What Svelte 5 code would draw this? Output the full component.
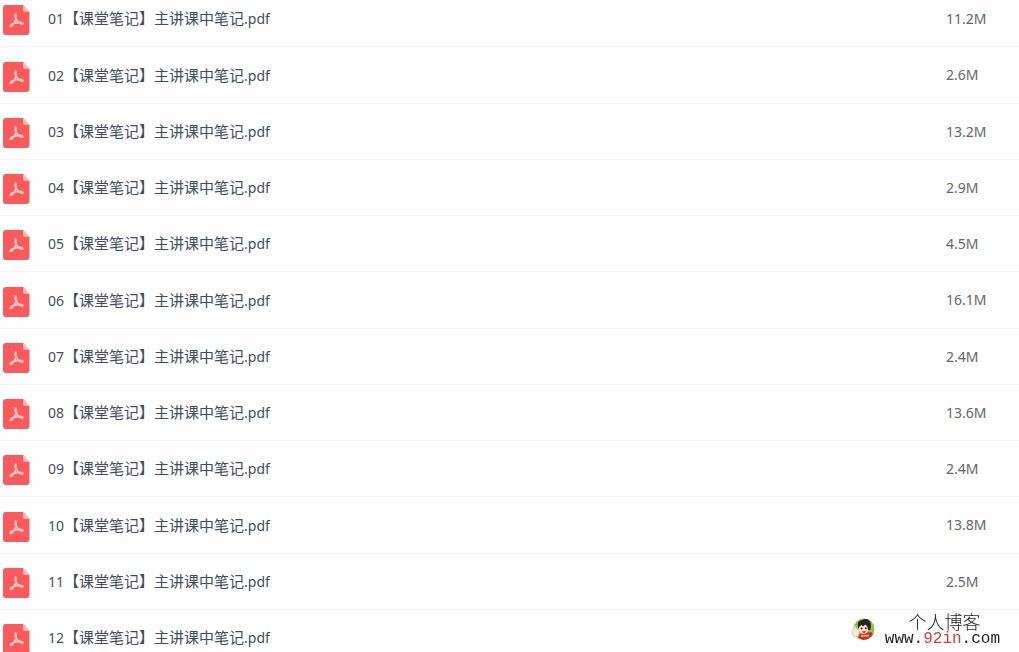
<script>
  const sizes = ['11.2M', '2.6M', '13.2M', '2.9M', '4.5M', '16.1M', '2.4M', '13.6M', '2.4M', '13.8M', '2.5M', ''];
  const files = sizes.map((size, i) => ({
    number: String(i + 1).padStart(2, '0'),
    title: '【课堂笔记】主讲课中笔记',
    size
  }));
</script>

<main>
  <table>
    <tbody>
      {#each files as file (file.number)}
        <tr>
          <td class="icon">
            <svg viewBox="0 0 27 30" width="27" height="30" aria-hidden="true">
              <path d="M3 0H20L26.5 7V27Q26.5 30 23.5 30H3Q0 30 0 27V3Q0 0 3 0Z" fill="#fa5a5b" />
              <path d="M20 0L26.5 7H22Q20 7 20 5Z" fill="#fdb5b5" />
              <path
                d="M12.6 9C13.9 11.5 13 14.8 11.5 17.5C10.2 19.8 8.6 21.6 7.3 21.4C6.6 20.2 9.3 18.8 12.2 18C15 17.3 18.5 17 20 18.3C19.3 19.8 16.6 18.7 14.8 16.6C12.8 14.4 11.7 11 12.6 9Z"
                fill="none"
                stroke="#fdcaca"
                stroke-width="1.7"
                stroke-linejoin="round"
              />
            </svg>
          </td>
          <td class="name">{file.number}<span>{file.title}</span>.pdf</td>
          <td class="size">{file.size}</td>
        </tr>
      {/each}
    </tbody>
  </table>

  <aside>
    <svg viewBox="0 0 24 24" width="24" height="24" aria-hidden="true">
      <circle cx="13" cy="12" r="10.5" fill="#8cc63e" />
      <path d="M7 21Q8 16 13 16L20 15Q23 17 21 19Q17 23 12 23Z" fill="#c9302b" />
      <path d="M10 19L18 18.5" stroke="#f1c7a0" stroke-width="1.5" />
      <ellipse cx="12.5" cy="12" rx="4.8" ry="5" fill="#fbe3d5" />
      <path d="M7 10Q5.5 4 11 3Q16.500 .5 19 4.500Q21 8 19 13L17 13L16.500 10L14.500 7.500L12 9.500L10.500 8L8.500 9.500L7.500 12Z" fill="#2b2027" />
      <circle cx="10.600" cy="11.500" r="1" fill="#33242a" />
      <circle cx="14.800" cy="11.300" r="1" fill="#33242a" />
      <path d="M10.800 13.800Q13 15 15 13.500Q14.500 16.300 12.800 16.200Q11.300 16 10.800 13.800Z" fill="#bd3b35" />
      <path d="M3 9Q5 8.500 5 11.500Q8 11.500 8 14Q8.500 19 5 20Q1 20 1 16Q1 13 3 12.500Z" fill="#fbe9df" stroke="#d8b9a7" stroke-width=".6" />
    </svg>
    <div class="mark">
      <strong>个人博客</strong>
      <span>www.<em>92in</em>.com</span>
    </div>
  </aside>
</main>

<style>
  :global(body) {
    background: #fefefe;
    overflow: hidden;
  }

  main {
    height: 100vh;
    overflow: hidden;
    font-family: "Noto Sans", "Noto Sans CJK SC", sans-serif;
    font-size: 14px;
    line-height: 20px;
  }

  table {
    width: 100%;
    margin-top: -9px;
    border-collapse: separate;
    border-spacing: 0;
    table-layout: fixed;
  }

  td {
    height: 55px;
    padding: 0;
    border-bottom: 1px solid #f4f4f5;
    vertical-align: middle;
    white-space: nowrap;
  }

  tr:nth-child(4n + 2) td {
    height: 56px;
  }

  .icon {
    width: 45px;
    padding: 3px 0 0 3px;
    box-sizing: border-box;
    height: 56px;
  }

  .icon svg {
    display: block;
  }

  .name {
    color: #424e5e;
    padding-left: 3px;
  }

  .name span {
    font-family: "Noto Sans CJK SC", sans-serif;
    font-size: 15px;
  }

  .size {
    width: 73px;
    color: #666;
  }

  aside {
    position: fixed;
    right: 19px;
    bottom: 4px;
    display: flex;
    align-items: center;
    gap: 10px;
  }

  .mark {
    display: flex;
    flex-direction: column;
    align-items: center;
    padding-top: 2px;
    color: #222;
  }

  strong {
    padding-left: 4px;
    font-family: "Noto Sans CJK SC", sans-serif;
    font-size: 18px;
    font-weight: 300;
    line-height: 18px;
  }

  .mark span {
    font-family: "Liberation Mono", monospace;
    font-size: 16px;
    line-height: 18px;
  }

  em {
    color: #d9393d;
    font-style: normal;
  }
</style>
